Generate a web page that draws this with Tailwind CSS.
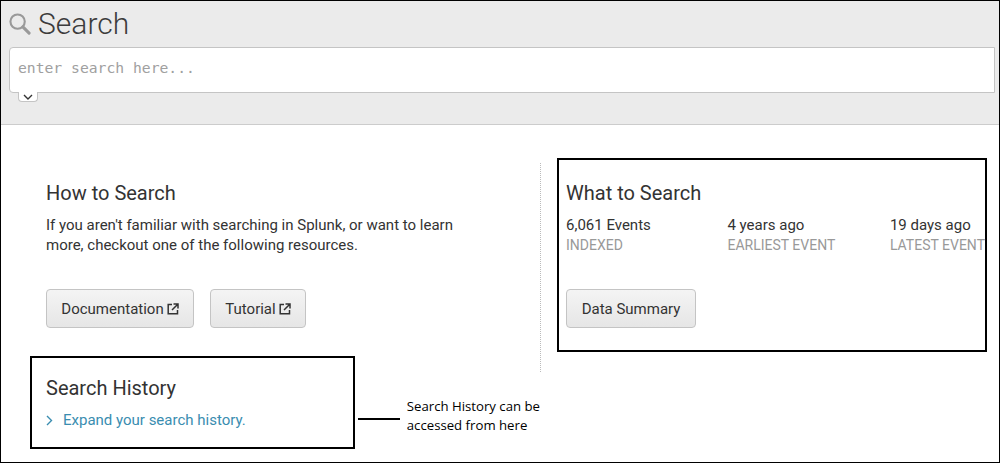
<!DOCTYPE html>
<html lang="en">
<head>
    <meta charset="UTF-8" />
    <title>Search</title>
    <script src="https://cdn.jsdelivr.net/npm/@tailwindcss/browser@4"></script>
</head>
<body class="bg-white">
<div class="w-[1000px] h-[463px] overflow-hidden border border-black font-['Roboto',sans-serif] text-[#333]">

    <!-- Search bar -->
    <header class="h-[124px] bg-[#ebebeb] border-b border-[#ccc] pl-2 pt-1 pr-[4px]">
        <div class="flex items-center h-[38px]">
            <svg class="w-[22px] h-[22px]" viewBox="0 0 23 23" fill="none" stroke="#999">
                <circle cx="9" cy="9" r="7.5" stroke-width="2.2"/>
                <path d="M14.5 14.5l6.5 6.5" stroke-width="3.2" stroke-linecap="round"/>
            </svg>
            <h1 class="ml-[7px] text-[30px] font-light leading-none text-[#3c3c3c]">Search</h1>
        </div>
        <div class="mt-[4px] h-[46px] bg-white border border-[#c4c4c4] rounded-l-[4px] pl-2 pt-[10px] font-['DejaVu_Sans_Mono',monospace] text-[14.7px] leading-5 text-[#a0a0a0]">enter search here...</div>
        <div class="ml-[9px] w-[20px] h-[10px] -mt-px bg-white border border-t-0 border-[#c4c4c4] rounded-b-[4px] flex items-center justify-center">
            <svg class="w-[10px] h-[6px]" viewBox="0 0 10 6" fill="none" stroke="#333" stroke-width="1.4"><path d="M1 1l4 4 4-4"/></svg>
        </div>
    </header>

    <main class="flex">
        <!-- Left column -->
        <section class="w-[539px] shrink-0 pl-[29px]">
            <div class="pl-4 pt-[56px]">
                <h2 class="text-xl leading-6 text-[#333]">How to Search</h2>
                <p class="mt-[10px] w-[420px] text-[15px] leading-5 text-[#333]">If you aren't familiar with searching in Splunk, or want to learn more, checkout one of the following resources.</p>
                <div class="flex gap-4 mt-[34px]">
                    <button class="flex items-center justify-center w-[148px] h-[39px] pt-px rounded-[4px] border border-[#c4c4c4] bg-gradient-to-b from-[#f4f4f4] to-[#e6e6e6] text-[15px] text-[#333]">Documentation
                        <svg class="w-[12px] h-[12px] ml-[3px]" viewBox="0 0 12 12" fill="none" stroke="#333" stroke-width="1.5"><path d="M5 1.5H1.2v9.3h9.3V7M6.5 1h4.5v4.5M11 1L5 7"/></svg>
                    </button>
                    <button class="flex items-center justify-center w-[96px] h-[39px] pt-px rounded-[4px] border border-[#c4c4c4] bg-gradient-to-b from-[#f4f4f4] to-[#e6e6e6] text-[15px] text-[#333]">Tutorial
                        <svg class="w-[12px] h-[12px] ml-[3px]" viewBox="0 0 12 12" fill="none" stroke="#333" stroke-width="1.5"><path d="M5 1.5H1.2v9.3h9.3V7M6.5 1h4.5v4.5M11 1L5 7"/></svg>
                    </button>
                </div>
            </div>
            <div class="flex items-start mt-[28px]">
                <div class="w-[325px] h-[93px] border-2 border-black pl-[14px] pt-[18px]">
                    <h2 class="text-xl leading-6 text-[#333]">Search History</h2>
                    <a class="flex items-center mt-[10px] text-[15px] leading-5 text-[#3a8db0]">
                        <svg class="w-[7px] h-[11px] mr-[10px]" viewBox="0 0 7 11" fill="none" stroke="#3a8db0" stroke-width="1.4"><path d="M1 1l4.5 4.5L1 10"/></svg>
                        Expand your search history.
                    </a>
                </div>
                <div class="w-[42px] h-[2px] ml-[3px] mt-[62px] bg-black"></div>
                <p class="ml-[7px] mt-[41px] w-max whitespace-nowrap font-['Open_Sans',sans-serif] text-[13.2px] leading-[19px] text-black">Search History can be<br>accessed from here</p>
            </div>
        </section>

        <!-- Divider -->
        <div class="w-px h-[209px] mt-[38px] border-l border-dotted border-[#bbb]"></div>

        <!-- Right column -->
        <section class="ml-[16px] mt-[33px] w-[430px] h-[194px] shrink-0 border-2 border-black pl-[7px] pt-[21px]">
            <h2 class="text-xl leading-6 text-[#333]">What to Search</h2>
            <div class="flex mt-[10px] text-[15px] leading-5 text-[#333]">
                <div class="w-[162px]">6,061 Events<div class="text-[14px] text-[#999]">INDEXED</div></div>
                <div class="w-[163px]">4 years ago<div class="text-[14px] text-[#999]">EARLIEST EVENT</div></div>
                <div class="whitespace-nowrap">19 days ago<div class="text-[14px] text-[#999]">LATEST EVENT</div></div>
            </div>
            <button class="block mt-[34px] w-[130px] h-[39px] pt-px rounded-[4px] border border-[#c4c4c4] bg-gradient-to-b from-[#f4f4f4] to-[#e6e6e6] text-[15px] text-[#333]">Data Summary</button>
        </section>
    </main>
</div>
</body>
</html>
